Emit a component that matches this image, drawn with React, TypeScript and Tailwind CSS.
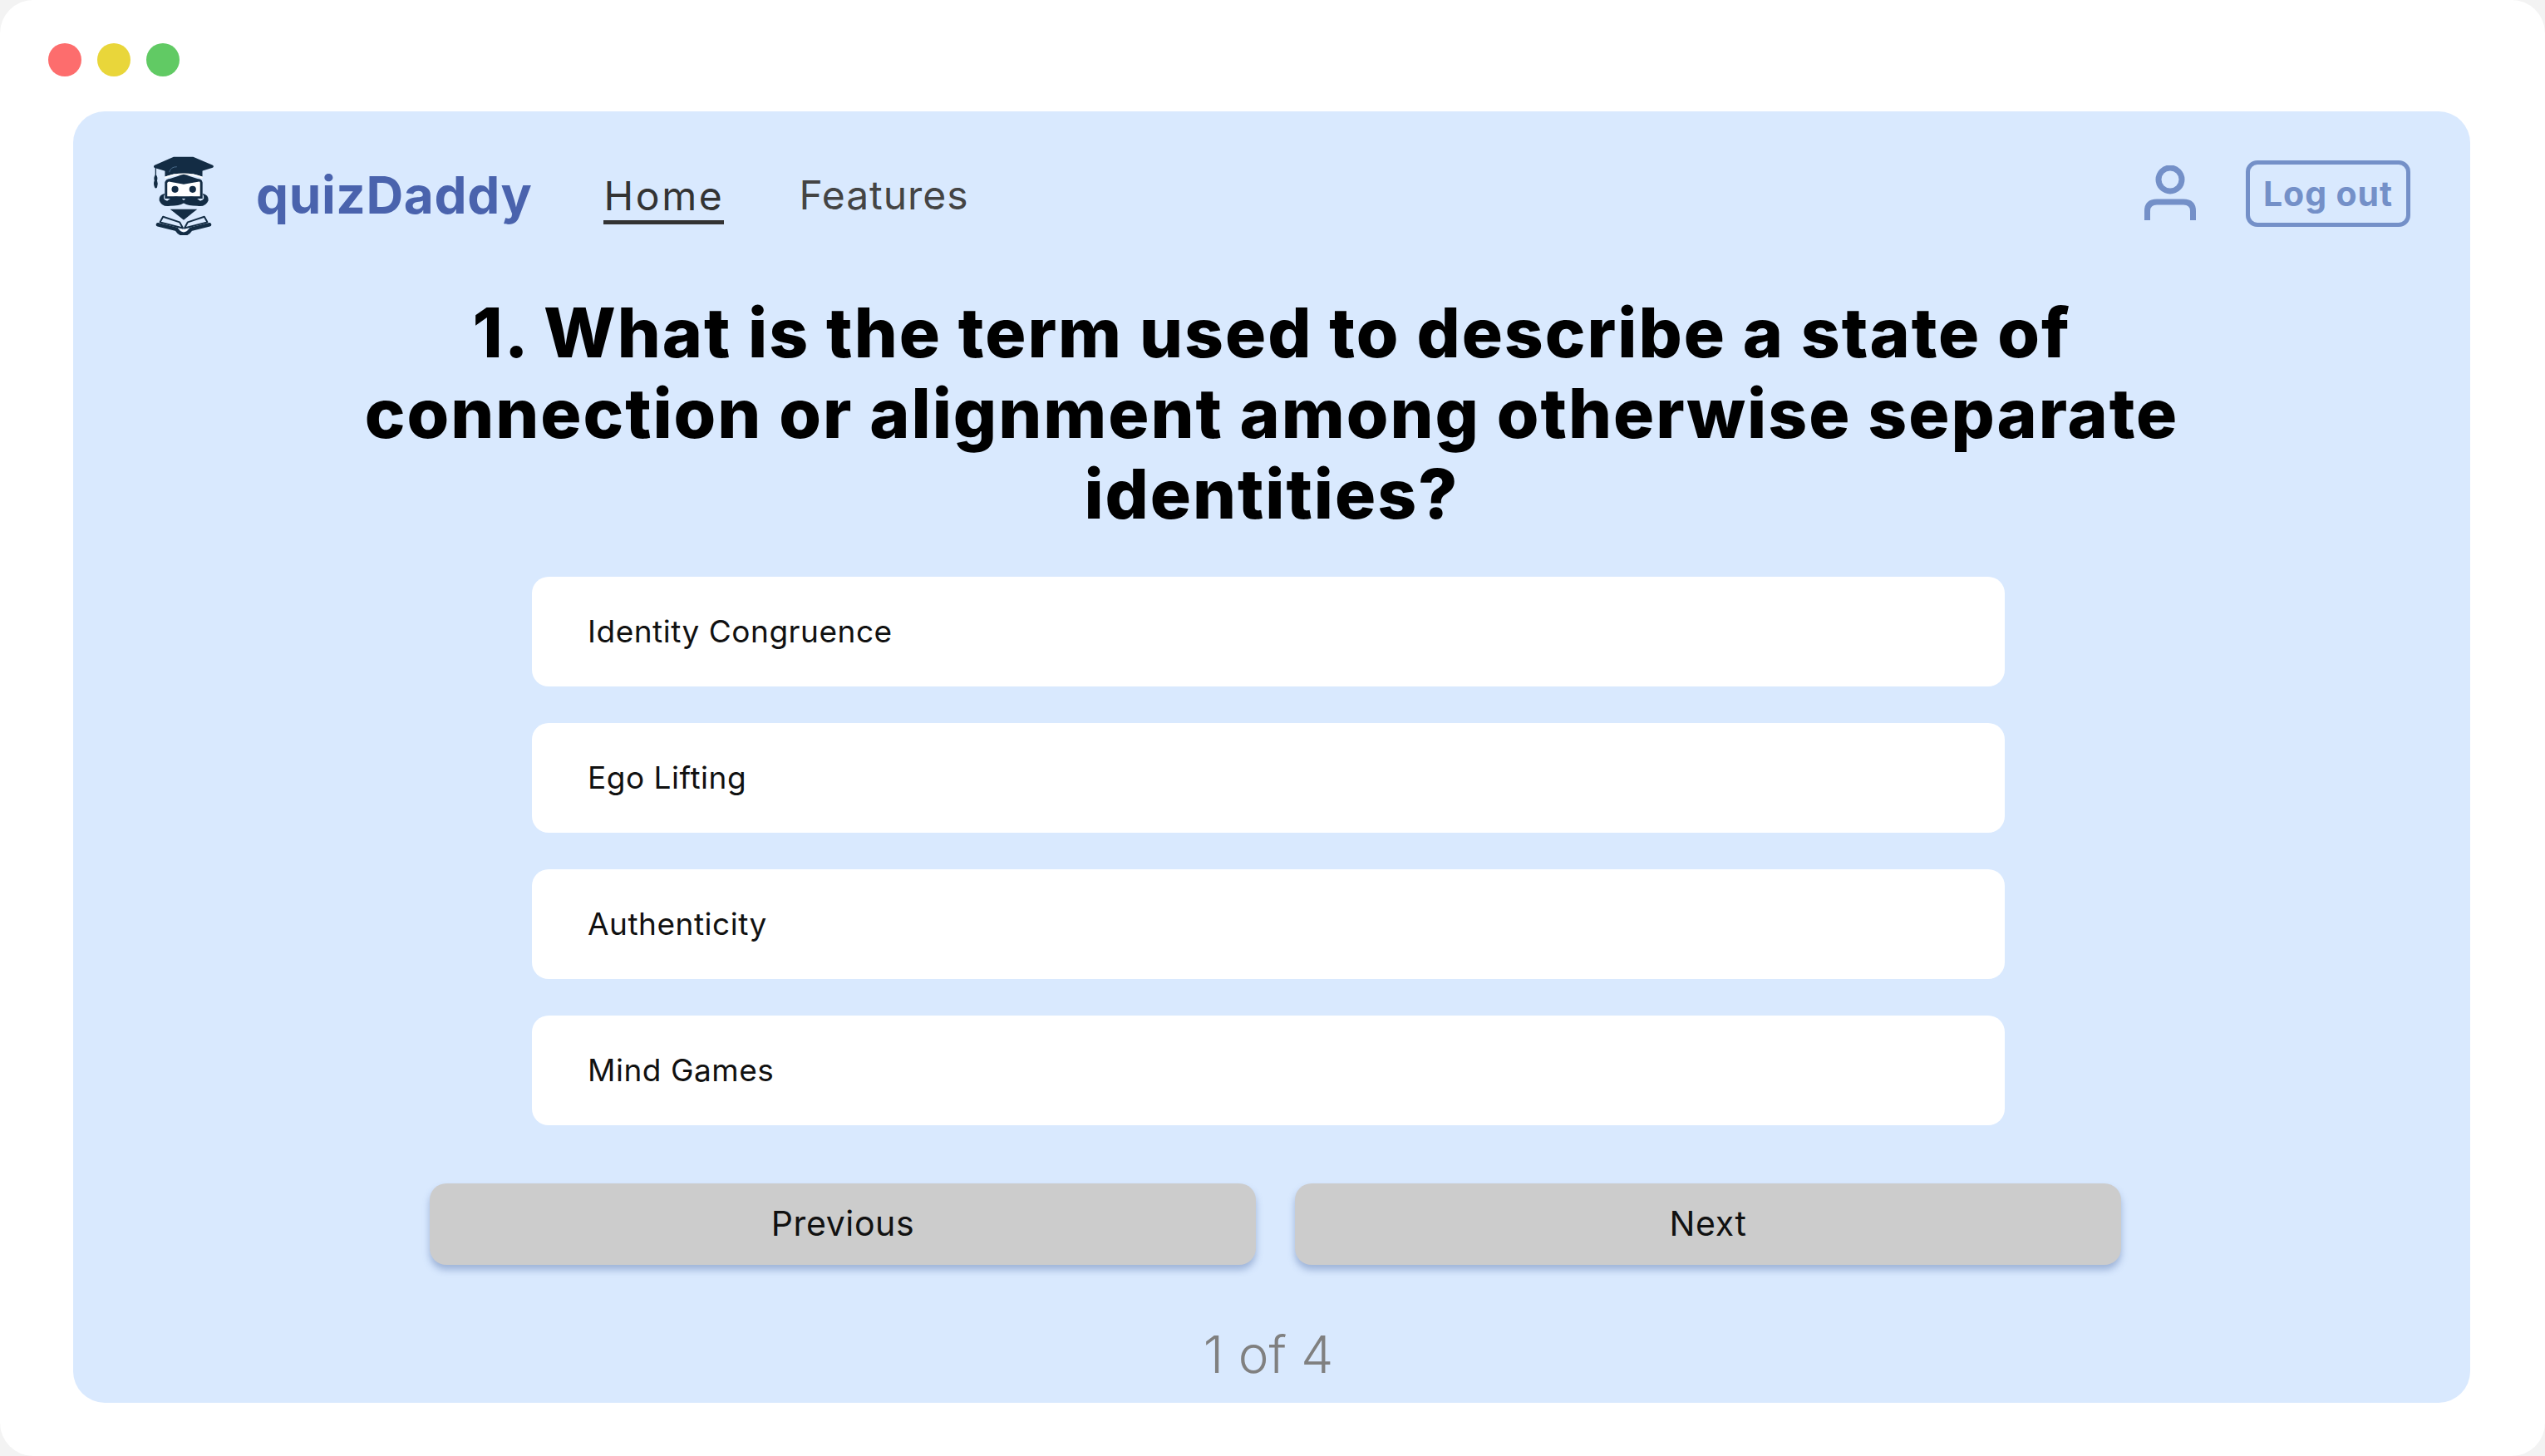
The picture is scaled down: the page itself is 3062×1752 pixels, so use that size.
const Logo = () => (
  <svg viewBox="103 50 224 294" className="w-[74px] h-[96px] shrink-0 mt-[4px]" fill="none">
    <path d="M178 55 H250 L322 86 Q328 91 322 95 L215 128 L108 96 Q101 91 108 86 Z" fill="#132c44" />
    <path d="M146 104 V128 Q215 102 284 128 V104 L215 126 Z" fill="#132c44" />
    <path d="M162 112 Q166 92 190 92" stroke="#4b6d8c" strokeWidth="3" />
    <path d="M146 132 Q215 106 284 132" stroke="#fff" strokeWidth="6" />
    <path d="M112 92 V125" stroke="#132c44" strokeWidth="4" />
    <path d="M112 120 Q121 130 117 143 Q122 155 117 168 Q112 174 108 168 Q102 155 107 143 Q103 130 112 120Z" fill="#132c44" />
    <path d="M150 150 Q155 138 170 144 L215 152 L262 144 Q278 138 280 150 V205 H150 Z" fill="#fff" stroke="#132c44" strokeWidth="9" />
    <path d="M150 140 L215 120 L280 140 L215 153 Z" fill="#132c44" />
    <circle cx="183" cy="175" r="12.5" fill="#132c44" />
    <circle cx="248" cy="175" r="12.5" fill="#132c44" />
    <path d="M146 190 Q122 196 125 216 Q135 242 165 236 Q198 236 215 226 Q232 236 265 236 Q295 242 306 216 Q308 196 284 190 Q298 212 276 218 Q250 196 232 204 Q222 208 215 215 Q208 208 198 204 Q180 196 154 218 Q134 212 146 190Z" fill="#132c44" />
    <path d="M160 226 Q185 208 205 224 Q185 232 160 226Z M270 226 Q245 208 225 224 Q245 232 270 226Z" fill="#132c44" />
    <path d="M165 248 H265 L215 288 Z" fill="#132c44" />
    <path d="M139 276 L200 296 L212 318 L128 296 Z M291 276 L230 296 L218 318 L302 296 Z" fill="#d9e9fe" stroke="#132c44" strokeWidth="6" strokeLinejoin="round" />
    <path d="M120 305 L188 322 Q200 340 215 340 Q230 340 242 322 L310 305" stroke="#132c44" strokeWidth="14" strokeLinecap="round" />
    <path d="M203 322 Q215 334 227 322" stroke="#fff" strokeWidth="5" />
  </svg>
);

const Option = ({ label }: { label: string }) => (
  <div className="h-[132px] rounded-[20px] bg-white flex items-center pl-[67px] text-[37px] text-[#111] tracking-[0.014em]">
    {label}
  </div>
);

const NavButton = ({ label }: { label: string }) => (
  <button className="flex-1 h-[98px] rounded-[20px] bg-[#cccccc] shadow-[0_6px_8px_rgba(70,100,160,0.4)] text-[41px] text-[#111] tracking-[0.015em]">
    {label}
  </button>
);

export default function App() {
  return (
    <div className="w-[3062px] h-[1752px] bg-[#f3f3f3] font-['Inter',sans-serif]">
      <div className="w-full h-full bg-white rounded-[40px] flex flex-col pl-[88px] pr-[90px]">
        <div className="h-[134px] shrink-0 flex items-center gap-[19px] -ml-[30px] pt-[10px]">
          <span className="w-[40px] h-[40px] rounded-full bg-[#fd6d6d]" />
          <span className="w-[40px] h-[40px] rounded-full bg-[#e9d63a]" />
          <span className="w-[40px] h-[40px] rounded-full bg-[#61ca64]" />
        </div>
        <div className="h-[1554px] rounded-[38px] bg-[#d9e9fe] flex flex-col">
          <header className="h-[182px] shrink-0 flex items-center pl-[96px] pr-[72px] pt-[16px]">
            <Logo />
            <span className="ml-[50px] mt-[2px] text-[62px] font-bold text-[#4a63ad] tracking-[0.01em]">quizDaddy</span>
            <a className="ml-[86px] text-[48px] text-[#333] border-b-[5px] border-[#333] leading-[58px] mt-[10px] tracking-[2.6px]">Home</a>
            <a className="ml-[90px] mt-[4px] text-[48px] text-[#444] tracking-[0.02em]">Features</a>
            <svg viewBox="0 0 62 68" className="ml-auto w-[62px] h-[68px]" fill="none" stroke="#7490c8" strokeWidth="7">
              <circle cx="31" cy="17" r="14" />
              <path d="M3.5 66 V55 Q3.5 44 15 44 H47 Q58.5 44 58.5 55 V66" />
            </svg>
            <button className="ml-[60px] w-[198px] h-[80px] pt-[2px] rounded-[14px] border-[5px] border-[#7490c8] text-[41px] font-bold text-[#7490c8] tracking-[0.9px]">
              Log out
            </button>
          </header>
          <h1 className="w-[2250px] mx-auto mt-[36px] text-center text-[82px] leading-[97px] font-extrabold text-black tracking-[1.95px]">
            1. What is the term used to describe a state of connection or alignment among otherwise separate identities?
          </h1>
          <div className="w-[1772px] ml-[552px] mt-[51px] flex flex-col gap-[44px]">
            <Option label="Identity Congruence" />
            <Option label="Ego Lifting" />
            <Option label="Authenticity" />
            <Option label="Mind Games" />
          </div>
          <div className="w-[2035px] ml-[429px] mt-[70px] flex gap-[47px]">
            <NavButton label="Previous" />
            <NavButton label="Next" />
          </div>
          <div className="w-[160px] ml-[1358px] mt-[72px] text-center text-[62px] leading-[72px] font-light text-[#808080]">1 of 4</div>
        </div>
      </div>
    </div>
  );
}
